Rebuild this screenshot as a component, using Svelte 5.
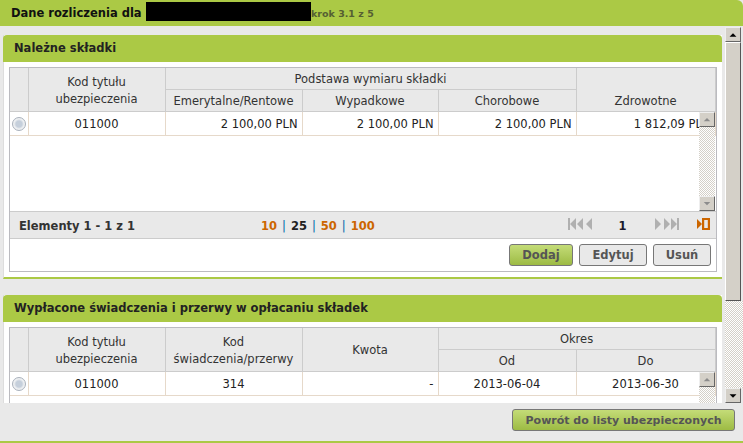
<script>
	const pageSizes = [10, 25, 50, 100];
</script>

<div class="screen">
	<header class="top">
		<h1>Dane rozliczenia dla</h1>
		<span class="redacted"></span>
		<span class="step">krok 3.1 z 5</span>
	</header>

	<div class="middle">
		<main class="content">
			<section class="panel first">
				<h2>Należne składki</h2>
				<div class="box">
					<div class="grid tall">
						<table>
							<colgroup>
								<col class="c0" /><col class="c1" /><col class="c2" /><col class="c3" /><col class="c4" /><col class="c5" />
							</colgroup>
							<thead>
								<tr>
									<th rowspan="2"></th>
									<th rowspan="2">Kod tytułu<br />ubezpieczenia</th>
									<th colspan="3">Podstawa wymiaru składki</th>
									<th rowspan="2" class="low">Zdrowotne</th>
								</tr>
								<tr>
									<th>Emerytalne/Rentowe</th>
									<th>Wypadkowe</th>
									<th>Chorobowe</th>
								</tr>
							</thead>
							<tbody>
								<tr>
									<td class="radio"><span class="dot"></span></td>
									<td class="mid">011000</td>
									<td class="num">2 100,00 PLN</td>
									<td class="num">2 100,00 PLN</td>
									<td class="num">2 100,00 PLN</td>
									<td class="num">1 812,09 PLN</td>
								</tr>
							</tbody>
						</table>
						<div class="inner-bar">
							<span class="btn"><svg viewBox="0 0 16 16"><path d="M4 10h8L8 6z" /></svg></span>
							<span class="btn"><svg viewBox="0 0 16 16"><path d="M4 6h8l-4 4z" /></svg></span>
						</div>
					</div>
					<div class="toolbar">
						<strong class="count">Elementy 1 - 1 z 1</strong>
						<div class="sizes">
							{#each pageSizes as size, i}
								{#if i > 0}<span class="sep">|</span>{/if}
								<span class:on={size === 25}>{size}</span>
							{/each}
						</div>
						<div class="pager">
							<svg class="nav" width="24" height="14" viewBox="0 0 24 14">
								<path d="M0 1h2v12H0zM8 1v12L2 7zM15 1v12L9 7zM24 1v12l-6-6z" />
							</svg>
							<b>1</b>
							<svg class="nav" width="24" height="14" viewBox="0 0 24 14">
								<path d="M0 1v12l6-6zM9 1v12l6-6zM16 1v12l6-6zM22 1h2v12h-2z" />
							</svg>
							<svg class="last" width="13" height="14" viewBox="0 0 13 14">
								<path d="M0 2v10l5-5z" /><path d="M5 1h8v12H5z M7.2 3v8h3.6V3z" fill-rule="evenodd" />
							</svg>
						</div>
					</div>
					<div class="actions">
						<button class="green">Dodaj</button>
						<button class="edit">Edytuj</button>
						<button class="del">Usuń</button>
					</div>
				</div>
			</section>

			<section class="panel">
				<h2>Wypłacone świadczenia i przerwy w opłacaniu składek</h2>
				<div class="box">
					<div class="grid">
						<table>
							<colgroup>
								<col class="c0" /><col class="c1" /><col class="c2" /><col class="c3" /><col class="c4" /><col class="c5" />
							</colgroup>
							<thead>
								<tr>
									<th rowspan="2"></th>
									<th rowspan="2">Kod tytułu<br />ubezpieczenia</th>
									<th rowspan="2">Kod<br />świadczenia/przerwy</th>
									<th rowspan="2">Kwota</th>
									<th colspan="2">Okres</th>
								</tr>
								<tr>
									<th>Od</th>
									<th>Do</th>
								</tr>
							</thead>
							<tbody>
								<tr>
									<td class="radio"><span class="dot"></span></td>
									<td class="mid">011000</td>
									<td class="mid">314</td>
									<td class="num">-</td>
									<td class="mid">2013-06-04</td>
									<td class="mid">2013-06-30</td>
								</tr>
							</tbody>
						</table>
						<div class="inner-bar">
							<span class="btn"><svg viewBox="0 0 16 16"><path d="M4 10h8L8 6z" /></svg></span>
						</div>
						<div class="more"></div>
					</div>
				</div>
			</section>
		</main>

		<aside class="scroll">
			<span class="arrow"><svg viewBox="0 0 16 15"><path d="M4 10h8L8 6z" /></svg></span>
			<span class="thumb"></span>
			<span class="track"></span>
			<span class="arrow"><svg viewBox="0 0 16 15"><path d="M4 6h8l-4 4z" /></svg></span>
		</aside>
	</div>

	<footer class="bottom">
		<button class="green back">Powrót do listy ubezpieczonych</button>
	</footer>
</div>

<style>
	:global(body) {
		margin: 0;
		background: #e9e9e9;
	}
	.screen {
		width: 743px;
		height: 443px;
		display: flex;
		flex-direction: column;
		overflow: hidden;
		background: #e9e9e9;
		color: #333;
		font-family: "DejaVu Sans", Verdana, sans-serif;
		font-size: 11.5px;
	}
	.top {
		flex: none;
		height: 26px;
		box-sizing: border-box;
		padding: 2px 0 0 11px;
		display: flex;
		align-items: flex-start;
		background: #abc945;
		border-radius: 0 6px 0 0;
	}
	h1 {
		margin: 0;
		font-size: 11.5px;
		line-height: 23px;
		color: #111;
		width: 135px;
		white-space: nowrap;
	}
	.redacted {
		width: 165px;
		height: 19px;
		background: #000;
	}
	.step {
		font-size: 9.5px;
		font-weight: bold;
		line-height: 23px;
		color: #555f33;
	}
	.middle {
		flex: 1;
		min-height: 0;
		display: flex;
	}
	.content {
		width: 725px;
		box-sizing: border-box;
		padding: 9px 3px 0;
		overflow: hidden;
	}
	.panel {
		background: #fff;
		border-bottom: 2px solid #abc945;
		border-left: 1px solid #ddd;
	}
	.panel.first {
		margin-bottom: 16px;
	}
	h2 {
		margin: 0 0 0 -1px;
		height: 27px;
		padding-left: 11px;
		font-size: 11.5px;
		line-height: 27px;
		color: #222;
		background: #abc945;
		border-radius: 4px 4px 0 0;
	}
	.box {
		margin: 5px 5px 0;
		border: 1px solid #bbbbc0;
		margin-bottom: 5px;
	}
	.grid {
		position: relative;
		overflow: hidden;
		background: #fff;
	}
	.grid.tall {
		height: 143px;
		border-bottom: 1px solid #ccc;
	}
	.more {
		height: 60px;
	}
	table {
		width: 705px;
		table-layout: fixed;
		border-collapse: collapse;
	}
	.c0 { width: 18px; }
	.c1 { width: 137px; }
	.c2 { width: 137px; }
	.c3 { width: 136px; }
	.c4 { width: 138px; }
	.c5 { width: 139px; }
	th {
		height: 19px;
		padding: 2px 0 0;
		font-weight: normal;
		background: #e9e9e9;
		border: 1px solid #ccc;
		line-height: 17px;
		white-space: nowrap;
	}
	thead tr:first-child th {
		border-top: 0;
	}
	th:first-child {
		border-left: 0;
	}
	th.low {
		vertical-align: bottom;
		padding-bottom: 1px;
	}
	td {
		height: 22px;
		padding: 1px 0 0;
		background: #fff;
		border: 1px solid #e6d9ca;
		border-top: 0;
		color: #222;
		white-space: nowrap;
	}
	td:first-child {
		border-left: 0;
	}
	.mid {
		text-align: center;
	}
	.num {
		text-align: right;
		padding-right: 4px;
	}
	.radio {
		text-align: center;
		line-height: 0;
		padding-top: 0;
	}
	.dot {
		display: inline-block;
		box-sizing: border-box;
		width: 14px;
		height: 14px;
		border: 1px solid #a9b1bc;
		border-radius: 50%;
		background: radial-gradient(circle, #c5cfdb 0 3px, #eef0f2 5px);
	}
	.inner-bar {
		position: absolute;
		top: 44px;
		right: 1px;
		bottom: 0;
		width: 16px;
		display: flex;
		flex-direction: column;
		justify-content: space-between;
		background: repeating-conic-gradient(#d4d0c8 0 25%, #fff 0 50%) 0 0 / 2px 2px;
	}
	.btn, .arrow {
		flex: none;
		display: block;
		box-sizing: border-box;
		width: 16px;
		height: 15px;
		background: #d4d0c8;
		border: 1px solid;
		border-color: #eee #666 #666 #eee;
	}
	.btn svg, .arrow svg {
		display: block;
		width: 14px;
		height: 13px;
	}
	.btn svg {
		fill: #8c8c8c;
	}
	.arrow svg {
		fill: #000;
	}
	.toolbar {
		height: 27px;
		display: flex;
		align-items: center;
		padding: 2px 6px 0 9px;
		box-sizing: border-box;
		background: #e9e9e9;
		border-bottom: 1px solid #ccc;
		font-weight: bold;
	}
	.count {
		width: 242px;
	}
	.sizes {
		display: flex;
		gap: 5px;
		color: #cc6600;
	}
	.sizes .on {
		color: #222;
	}
	.sizes .sep {
		color: #0066aa;
		font-weight: normal;
	}
	.pager {
		margin-left: auto;
		display: flex;
		align-items: center;
	}
	.pager svg {
		position: relative;
		top: -2px;
	}
	.pager b {
		box-sizing: border-box;
		width: 63px;
		padding-right: 2px;
		text-align: center;
		color: #1a1a2a;
	}
	.nav {
		fill: #b0b0b0;
	}
	.last {
		margin-left: 18px;
		fill: #cc6600;
	}
	.actions {
		height: 32px;
		display: flex;
		justify-content: flex-end;
		align-items: center;
		gap: 6px;
		padding-right: 5px;
	}
	button {
		height: 22px;
		padding: 0;
		font: bold 11.5px "DejaVu Sans", Verdana, sans-serif;
		color: #555;
		background: #e9e9e9;
		border: 1px solid #777;
		border-radius: 3px;
	}
	.green {
		width: 64px;
		background: linear-gradient(#c4dc78, #9dbb44);
	}
	.edit {
		width: 68px;
	}
	.del {
		width: 58px;
	}
	.scroll {
		width: 18px;
		display: flex;
		flex-direction: column;
		padding-top: 1px;
	}
	.thumb {
		flex: none;
		height: 259px;
		width: 16px;
		box-sizing: border-box;
		background: #d4d0c8;
		border: 1px solid;
		border-color: #fff #555 #555 #fff;
	}
	.track {
		flex: 1;
		background: repeating-conic-gradient(#d4d0c8 0 25%, #fff 0 50%) 0 0 / 2px 2px;
	}
	.bottom {
		flex: none;
		height: 40px;
		box-sizing: border-box;
		padding: 6px 8px 0 0;
		display: flex;
		justify-content: flex-end;
		align-items: flex-start;
		border-bottom: 2px solid #abc945;
	}
	.back {
		width: 223px;
		font-size: 11px;
	}
</style>
